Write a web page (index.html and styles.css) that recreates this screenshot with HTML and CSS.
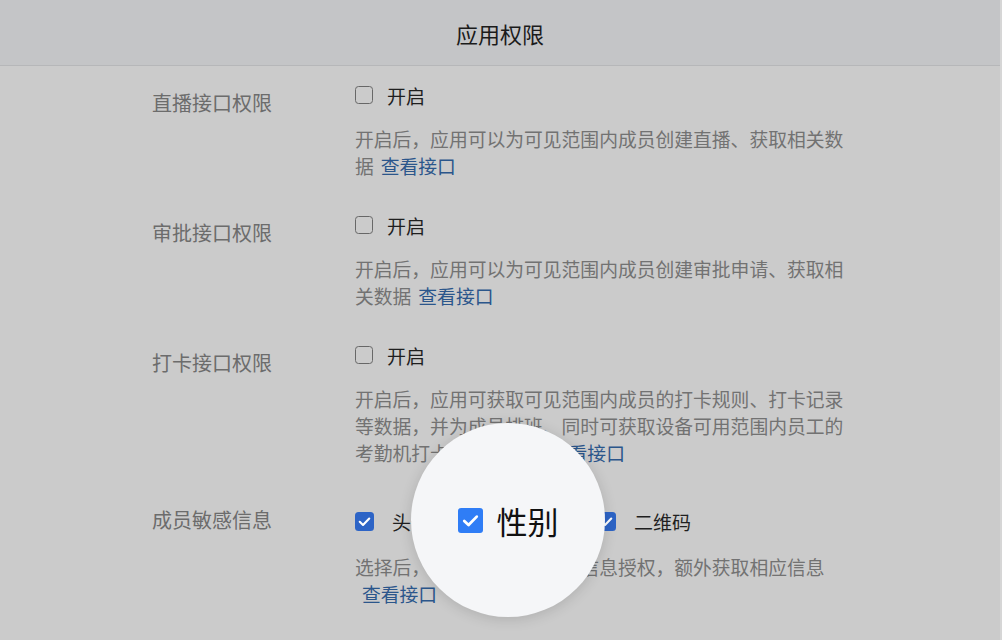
FILE: index.html
```html
<!DOCTYPE html>
<html lang="zh-CN">
<head>
    <meta charset="UTF-8">
    <meta name="viewport" content="width=device-width, initial-scale=1.0">
    <title>应用权限</title>
    <link rel="stylesheet" href="styles.css">
</head>
<body>
    <header class="topbar">
        <h1>应用权限</h1>
    </header>

    <main class="perms">
        <section class="perm">
            <div class="perm-label">直播接口权限</div>
            <div class="perm-body">
                <label class="opt"><span class="box"></span>开启</label>
                <p class="desc">开启后，应用可以为可见范围内成员创建直播、获取相关数据<a class="api-link">查看接口</a></p>
            </div>
        </section>

        <section class="perm">
            <div class="perm-label">审批接口权限</div>
            <div class="perm-body">
                <label class="opt"><span class="box"></span>开启</label>
                <p class="desc">开启后，应用可以为可见范围内成员创建审批申请、获取相关数据<a class="api-link">查看接口</a></p>
            </div>
        </section>

        <section class="perm">
            <div class="perm-label">打卡接口权限</div>
            <div class="perm-body">
                <label class="opt"><span class="box"></span>开启</label>
                <p class="desc">开启后，应用可获取可见范围内成员的打卡规则、打卡记录等数据，并为成员排班、同时可获取设备可用范围内员工的考勤机打卡及设备数据<a class="api-link">查看接口</a></p>
            </div>
        </section>

        <section class="perm">
            <div class="perm-label">成员敏感信息</div>
            <div class="perm-body">
                <div class="opts">
                    <label class="opt wide"><span class="box checked"><svg viewBox="0 0 18 18"><polyline points="4.5,9.3 7.6,12.3 13.5,6.2"/></svg></span>头像</label>
                    <label class="opt wide"><span class="box checked"><svg viewBox="0 0 18 18"><polyline points="4.5,9.3 7.6,12.3 13.5,6.2"/></svg></span>性别</label>
                    <label class="opt wide"><span class="box checked"><svg viewBox="0 0 18 18"><polyline points="4.5,9.3 7.6,12.3 13.5,6.2"/></svg></span>二维码</label>
                </div>
                <p class="desc">选择后，可向成员请求敏感信息授权，额外获取相应信息<a class="api-link">查看接口</a></p>
            </div>
        </section>
    </main>

    <!-- zoomed-in hint over the "性别" option -->
    <div class="magnifier">
        <span class="big-box"><svg viewBox="0 0 18 18"><polyline points="4.5,9.3 7.6,12.3 13.5,6.2"/></svg></span>
        <span class="big-text">性别</span>
    </div>
</body>
</html>
```

FILE: styles.css
```css
body {
    margin: 0;
    height: 640px;
    overflow: hidden;
    background: #cbcbcb;
    font-family: "Noto Sans CJK SC", "Noto Sans", sans-serif;
    border-right: 2px solid #d6d6d6;
    box-sizing: border-box;
}
.topbar {
    height: 65px;
    background: #c4c5c7;
    border-bottom: 1px solid #b6b7b9;
    display: flex;
    align-items: center;
    justify-content: center;
}
.topbar h1 {
    margin: 0;
    font-size: 22px;
    font-weight: 400;
    color: #1b1b1b;
}
.perms {
    padding: 19px 0 0 152px;
}
.perm {
    display: grid;
    grid-template-columns: 203px 500px;
    margin-bottom: 36px;
}
.perm-label {
    font-size: 20px;
    line-height: 36px;
    color: #6c6c6c;
}
.opts {
    display: flex;
    gap: 46px;
    padding-top: 9px;
}
.opt {
    display: flex;
    align-items: center;
    gap: 14px;
    height: 20px;
    font-size: 19px;
    color: #1f1f1f;
}
.opt.wide {
    gap: 18px;
}
.box {
    width: 18px;
    height: 18px;
    box-sizing: border-box;
    border: 1.7px solid #676767;
    border-radius: 3.5px;
    display: flex;
    align-items: center;
    justify-content: center;
}
.box.checked {
    border: none;
    width: 19px;
    height: 19px;
    background: #2d64c6;
}
.box svg,
.big-box svg {
    width: 100%;
    height: 100%;
    fill: none;
    stroke: #fff;
    stroke-width: 2;
    stroke-linecap: round;
    stroke-linejoin: round;
}
.desc {
    margin: 20px 0 0;
    font-size: 18.8px;
    line-height: 27px;
    color: #727272;
}
.opts + .desc {
    margin-top: 22px;
}
.api-link {
    margin-left: 7px;
    color: #2b568b;
    white-space: nowrap;
    cursor: pointer;
}
.magnifier {
    position: absolute;
    left: 411px;
    top: 423px;
    width: 194px;
    height: 194px;
    border-radius: 50%;
    background: #f5f6f8;
    box-shadow: 0 2px 14px rgba(0, 0, 0, 0.14);
    display: flex;
    align-items: center;
    justify-content: center;
    gap: 14px;
}
.big-box {
    width: 25px;
    height: 25px;
    border-radius: 3px;
    background: #2f7df6;
}
.big-text {
    font-size: 31px;
    line-height: 1;
    color: #111;
}
```
